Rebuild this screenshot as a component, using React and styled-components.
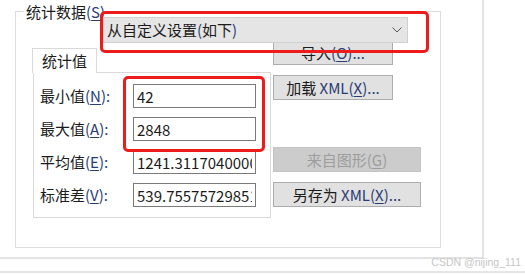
import React from "react"
import styled, { createGlobalStyle } from "styled-components"

const GlobalStyle = createGlobalStyle`
  html, body {
    margin: 0;
    padding: 0;
    background: #ffffff;
  }
  body {
    font-family: "Noto Sans CJK SC", "Noto Sans", sans-serif;
    font-size: 15px;
    color: #1b1b1b;
  }
`

const Window = styled.div`
  position: relative;
  box-sizing: border-box;
  width: 525px;
  height: 273px;
  border-bottom: 2px solid #e6e6e6;
`

const Frame = styled.div`
  box-sizing: border-box;
  width: 484px;
  height: 259px;
  border-right: 2px solid #e3e3e3;
  border-bottom: 2px solid #e3e3e3;
  padding: 11px 0 0 15px;
`

const Group = styled.div`
  position: relative;
  box-sizing: border-box;
  width: 426px;
  height: 237px;
  border: 1px solid #dcdcdc;
  display: flex;
  align-items: flex-start;
  gap: 2px;
  padding: 28px 0 0 17px;
`

const Legend = styled.div`
  position: absolute;
  top: -9px;
  left: 8px;
  padding: 0 2px;
  line-height: 18px;
  background: #ffffff;
`

const Latin = styled.span`
  color: #2a3c72;
`

const Key = styled.span`
  text-decoration: underline;
  text-underline-offset: 2px;
`

const Highlight = styled.div`
  position: absolute;
  left: ${(p) => p.$left}px;
  top: ${(p) => p.$top}px;
  border: 3px solid #ee1b1b;
  border-radius: 5px;
  padding: ${(p) => p.$pad};
  width: ${(p) => p.$w}px;
  height: ${(p) => p.$h}px;
  z-index: 3;
`

const Combo = styled.div`
  box-sizing: border-box;
  width: 305px;
  height: 26px;
  background: #e5e5e5;
  border: 1px solid #d0d0d0;
  display: flex;
  align-items: center;
  justify-content: space-between;
  padding: 0 5px 0 3px;
  line-height: 24px;
`

const TabControl = styled.div`
  margin-top: 8px;
  width: 238px;
`

const Tab = styled.div`
  position: relative;
  z-index: 1;
  box-sizing: border-box;
  width: 65px;
  height: 25px;
  margin-left: -1px;
  margin-bottom: -1px;
  border: 1px solid #d9d9d9;
  border-bottom: none;
  background: #ffffff;
  padding-left: 9px;
  line-height: 24px;
`

const Panel = styled.div`
  position: relative;
  box-sizing: border-box;
  height: 146px;
  border: 1px solid #d9d9d9;
  padding: 11px 0 0 6px;
  display: grid;
  grid-template-columns: 93px 123px;
  grid-auto-rows: 24px;
  row-gap: 9px;
  align-items: center;
`

const Label = styled.label`
  line-height: 20px;
  white-space: nowrap;
`

const Field = styled.input`
  box-sizing: border-box;
  width: 123px;
  height: 24px;
  margin: 0;
  border: 1px solid #7a7a7a;
  padding: 0 3px;
  font: inherit;
  font-size: 15px;
  color: #1b1b1b;
  background: #ffffff;
  outline: none;
`

const Buttons = styled.div`
  display: flex;
  flex-direction: column;
  align-items: flex-start;
`

const Button = styled.button`
  box-sizing: border-box;
  width: ${(p) => (p.$wide ? 148 : 120)}px;
  height: 25px;
  margin: ${(p) => p.$gap || 0}px 0 0 0;
  padding: 0;
  background: #e1e1e1;
  border: 1px solid #adadad;
  font: inherit;
  font-size: 15px;
  line-height: 23px;
  color: #1b1b1b;
  &:disabled {
    background: #cccccc;
    border-color: #c4c4c4;
    color: #9c9c9c;
  }
  &:disabled ${Latin} {
    color: #9c9c9c;
  }
`

const Watermark = styled.div`
  position: absolute;
  right: 4px;
  top: 255px;
  font-family: "Liberation Sans", sans-serif;
  font-size: 10.5px;
  line-height: 14px;
  white-space: nowrap;
  color: #c6c6c6;
`

const Chevron = () => (
  <svg width="10" height="6" viewBox="0 0 10 6">
    <polyline points="0.5,0.5 5,5 9.5,0.5" fill="none" stroke="#555" strokeWidth="1" />
  </svg>
)

const Mn = ({ k, after = "" }) => (
  <Latin>
    (<Key>{k}</Key>){after}
  </Latin>
)

const stats = [
  { label: "最小值", key: "N", value: "42" },
  { label: "最大值", key: "A", value: "2848" },
  { label: "平均值", key: "E", value: "1241.31170400002" },
  { label: "标准差", key: "V", value: "539.755757298515" },
]

const App = () => {
  return (
    <>
      <GlobalStyle />
      <Window>
        <Frame>
          <Group>
            <Legend>
              统计数据<Mn k="S" />
            </Legend>
            <Highlight $left={84} $top={-1} $w={314} $h={30} $pad="3px 9px 3px 0">
              <Combo>
                <span>
                  从自定义设置<Latin>(</Latin>如下<Latin>)</Latin>
                </span>
                <Chevron />
              </Combo>
            </Highlight>
            <TabControl>
              <Tab>统计值</Tab>
              <Panel>
                {stats.map((s) => (
                  <React.Fragment key={s.key}>
                    <Label>
                      {s.label}
                      <Mn k={s.key} after=":" />
                    </Label>
                    <Field readOnly value={s.value} />
                  </React.Fragment>
                ))}
                <Highlight $left={89} $top={3} $w={136} $h={70} $pad="0" />
              </Panel>
            </TabControl>
            <Buttons>
              <Button>
                导入<Mn k="O" after="..." />
              </Button>
              <Button $gap={10}>
                加载 <Latin>XML</Latin>
                <Mn k="X" after="..." />
              </Button>
              <Button $wide $gap={47} disabled>
                来自图形<Mn k="G" />
              </Button>
              <Button $wide $gap={10}>
                另存为 <Latin>XML</Latin>
                <Mn k="X" after="..." />
              </Button>
            </Buttons>
          </Group>
        </Frame>
        <Watermark>CSDN @nijing_111</Watermark>
      </Window>
    </>
  )
}

export default App
